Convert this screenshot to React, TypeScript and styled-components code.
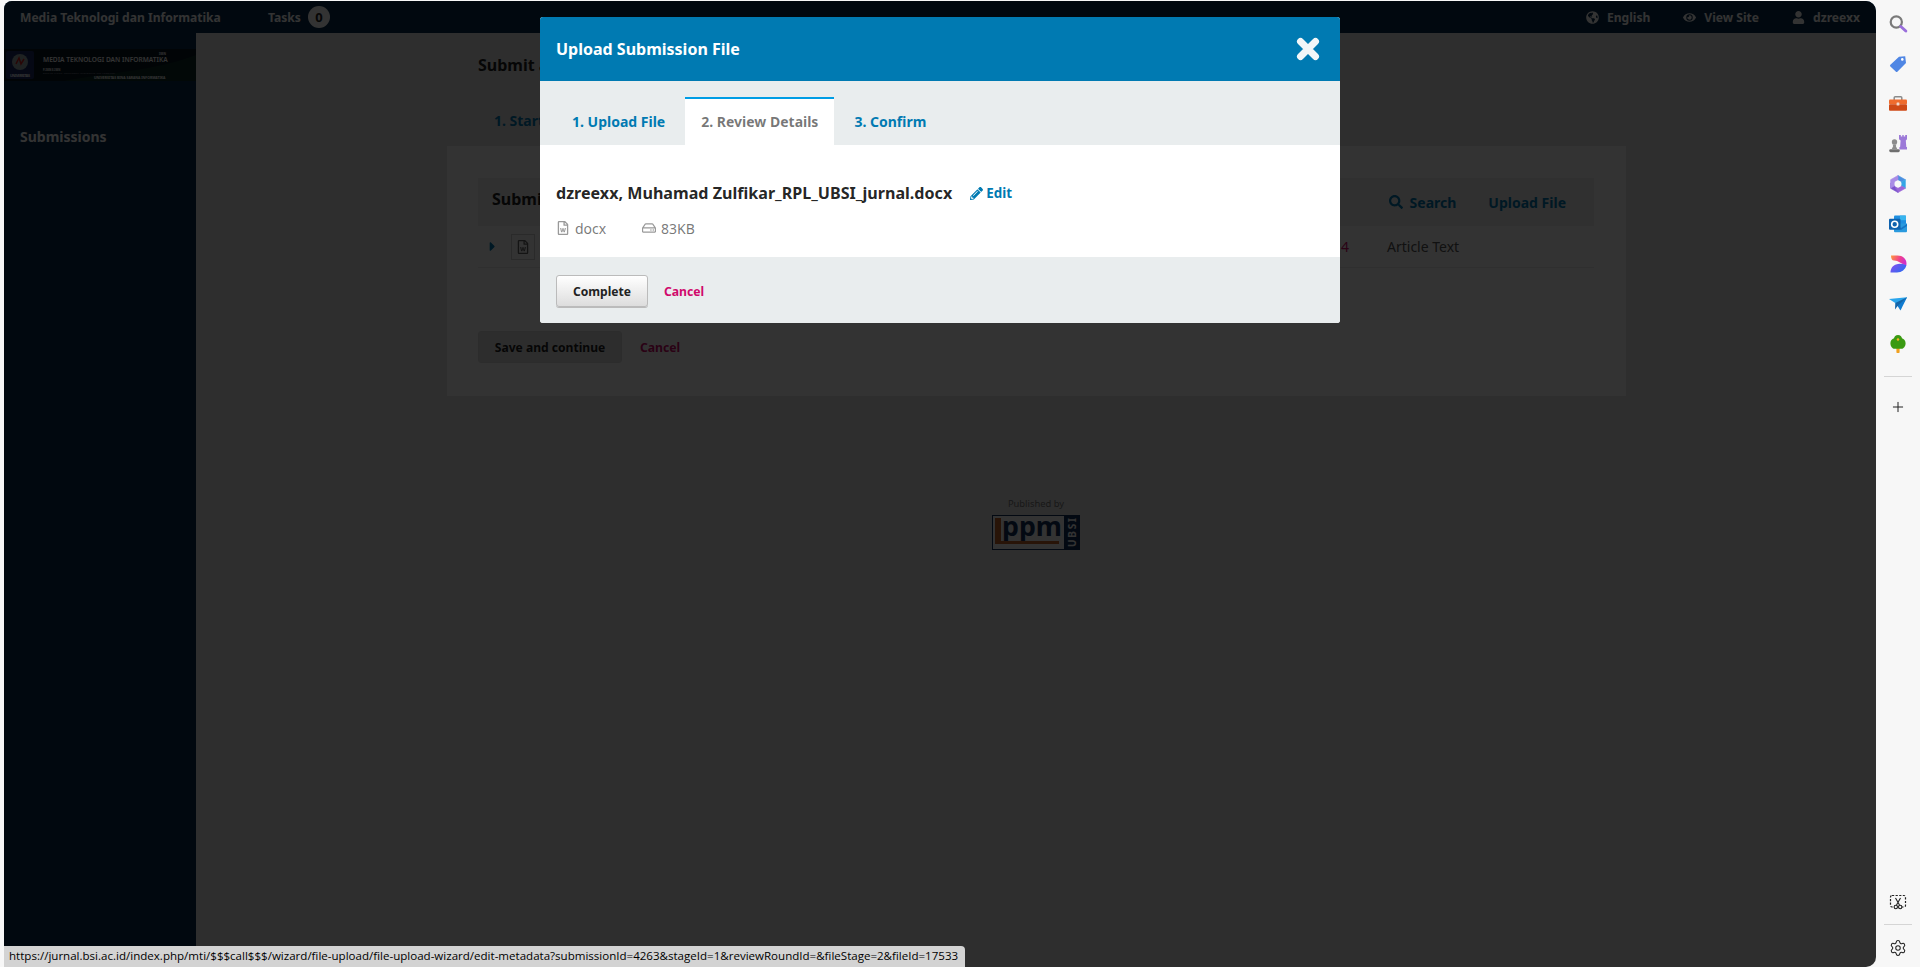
import React from 'react';
import styled, { createGlobalStyle } from 'styled-components';
import { FaGlobeAmericas, FaEye, FaUser, FaPencilAlt, FaSearch, FaRegFileWord, FaRegHdd, FaCaretRight } from 'react-icons/fa';
import { Plus, Settings } from 'lucide-react';

const Global = createGlobalStyle`
  html, body { margin: 0; padding: 0; height: 100%; overflow: hidden; background: #f7f7f7; }
  #root { height: 100%; }
  * { box-sizing: border-box; }
`;

const Shell = styled.div`
  display: flex;
  width: 1920px;
  height: 967px;
  padding: 1px 0 0 4px;
  font-family: "Noto Sans", "Liberation Sans", sans-serif;
  font-size: 14px;
  color: #222;
`;

const Frame = styled.div`
  position: relative;
  flex: 1;
  display: flex;
  flex-direction: column;
  background: #fff;
  overflow: hidden;
  border-radius: 8px 10px 10px 0;
`;

const TopBar = styled.header`
  flex: 0 0 32px;
  display: flex;
  align-items: center;
  padding: 0 16px;
  background: #052a4b;
  color: #fff;
  font-weight: 700;
  font-size: 12.1px;
`;

const SiteName = styled.span`
  width: 248px;
`;

const Badge = styled.span`
  display: inline-flex;
  align-items: center;
  justify-content: center;
  width: 22px;
  height: 22px;
  margin-left: 7px;
  border-radius: 50%;
  background: #fff;
  color: #222;
  font-size: 13px;
`;

const TopRight = styled.div`
  margin-left: auto;
  display: flex;
  align-items: center;
  gap: 33px;
`;

const TopLink = styled.span`
  display: inline-flex;
  align-items: center;
  gap: 8px;
  font-size: 12.1px;
  svg { font-size: 13px; }
`;

const Main = styled.div`
  flex: 1;
  display: flex;
  min-height: 0;
`;

const Side = styled.aside`
  flex: 0 0 192px;
  background: #052a4b;
  padding-top: 16px;
  color: #fff;
`;

const Banner = styled.svg`
  display: block;
  width: 192px;
  height: 32px;
`;

const SideLink = styled.div`
  margin: 46px 0 0 16px;
  font-weight: 700;
  font-size: 14px;
  line-height: 20px;
`;

const Content = styled.main`
  flex: 1;
  background: #e6e6e6;
  padding-top: 21px;
`;

const PageHead = styled.div`
  margin-left: 282px;
  font-weight: 700;
  font-size: 16px;
  line-height: 22px;
`;

const BgTabs = styled.div`
  margin: 35px 0 0 298px;
  height: 35px;
  color: #007ab2;
  font-weight: 700;
  font-size: 14px;
  line-height: 20px;
`;

const Panel = styled.section`
  margin-left: 251px;
  width: 1179px;
  height: 250px;
  padding: 32px 32px 0 31px;
  background: #fff;
`;

const Grid = styled.div`
  box-shadow: 0 1px 1px rgba(0, 0, 0, .08);
  background: #fff;
`;

const GridHead = styled.div`
  height: 48px;
  display: flex;
  align-items: center;
  padding: 0 28px 0 14px;
  background: #eee;
`;

const GridTitle = styled.span`
  margin-bottom: 6px;
  font-weight: 700;
  font-size: 16px;
`;

const GridActions = styled.div`
  margin-left: auto;
  display: flex;
  align-items: center;
  gap: 32px;
  color: #007ab2;
  font-weight: 700;
  font-size: 14px;
`;

const ActionLink = styled.span`
  display: inline-flex;
  align-items: center;
  gap: 7px;
`;

const GridRow = styled.div`
  height: 41px;
  display: flex;
  align-items: center;
  padding-left: 7px;
  color: #555;
`;

const Caret = styled.span`
  display: inline-flex;
  width: 26px;
  color: #007ab2;
  font-size: 15px;
`;

const FileBox = styled.span`
  display: inline-flex;
  align-items: center;
  justify-content: center;
  width: 24px;
  height: 26px;
  border: 1px solid #d0d0d0;
  color: #666;
  font-size: 14px;
`;

const RowNum = styled.span`
  margin-left: 798px;
  width: 54px;
  color: #d00a6c;
`;

const FormActions = styled.div`
  margin-top: 64px;
  display: flex;
  align-items: center;
  gap: 18px;
`;

const Btn = styled.button<{ $w: number }>`
  width: ${p => p.$w}px;
  height: 32px;
  padding: 0;
  border: 1px solid #bbb;
  border-radius: 3px;
  background: linear-gradient(#fff, #ddd);
  box-shadow: 0 1px 0 #bbb;
  color: #222;
  font: 700 12.1px "Noto Sans", sans-serif;
`;

const PageBtn = styled(Btn)`
  border-color: #ddd;
  background: #e2e2e2;
  box-shadow: none;
`;

const CancelLink = styled.span`
  color: #d00a6c;
  font-weight: 700;
  font-size: 12.2px;
`;

const Publisher = styled.div`
  margin-top: 101px;
  display: flex;
  flex-direction: column;
  align-items: center;
  color: #777;
  font-size: 9.4px;
  line-height: 14px;
`;

const PubLogo = styled.svg`
  display: block;
  margin-top: 4px;
  width: 88px;
  height: 35px;
`;

const Overlay = styled.div`
  position: absolute;
  inset: 0;
  background: rgba(0, 0, 0, .8);
`;

const Modal = styled.div`
  position: absolute;
  left: 536px;
  top: 16px;
  width: 800px;
  height: 306px;
  display: flex;
  flex-direction: column;
  border-radius: 3px;
  overflow: hidden;
  background: #fff;
`;

const ModalHead = styled.div`
  flex: 0 0 64px;
  display: flex;
  align-items: center;
  justify-content: space-between;
  padding: 0 19px 0 16px;
  background: #007ab2;
  color: #fff;
  font-weight: 700;
  font-size: 16px;
`;

const CloseIcon = styled.svg`
  display: block;
  width: 26px;
  height: 26px;
`;

const TabBar = styled.div`
  flex: 0 0 64px;
  display: flex;
  align-items: flex-end;
  gap: 4px;
  padding-left: 16px;
  background: #e9edee;
`;

const Tab = styled.div<{ $active?: boolean }>`
  height: 48px;
  padding: 0 16px 2px;
  display: flex;
  align-items: center;
  border-top: 2px solid ${p => (p.$active ? '#009de5' : 'transparent')};
  background: ${p => (p.$active ? '#fff' : 'transparent')};
  color: ${p => (p.$active ? 'rgba(0,0,0,.54)' : '#007ab2')};
  font-weight: 700;
  font-size: 14px;
`;

const ModalBody = styled.div`
  flex: 0 0 112px;
  padding: 36px 16px 0;
`;

const FileLine = styled.div`
  display: flex;
  align-items: center;
  height: 24px;
  font-weight: 700;
  font-size: 16.1px;
  color: rgba(0,0,0,.87);
`;

const EditLink = styled.span`
  display: inline-flex;
  align-items: center;
  gap: 3px;
  margin-left: 18px;
  color: #007ab2;
  font-size: 13.4px;
  svg { font-size: 13px; }
`;

const Meta = styled.div`
  display: flex;
  align-items: center;
  margin-top: 11px;
  height: 24px;
  color: rgba(0,0,0,.54);
  font-size: 14px;
`;

const MetaItem = styled.span<{ $w: number }>`
  display: inline-flex;
  align-items: center;
  gap: 5px;
  width: ${p => p.$w}px;
  svg { font-size: 14px; color: #999; }
`;

const ModalFoot = styled.div`
  flex: 1;
  display: flex;
  align-items: center;
  gap: 16px;
  padding: 2px 16px 0;
  background: #e9edee;
`;

const StatusBar = styled.div`
  position: absolute;
  left: 0;
  bottom: 0;
  width: 961px;
  height: 21px;
  padding-left: 5px;
  background: #d3d3d3;
  border-top-right-radius: 4px;
  color: #000;
  font-family: "Open Sans", "Noto Sans", sans-serif;
  font-size: 11.56px;
  line-height: 20px;
  white-space: nowrap;
`;

const Rail = styled.nav`
  flex: 0 0 44px;
  display: flex;
  flex-direction: column;
  align-items: center;
  padding: 3px 0 0;
  background: #f7f7f7;
`;

const RailItem = styled.div<{ $h?: number }>`
  flex: 0 0 ${p => p.$h ?? 40}px;
  width: 100%;
  display: flex;
  align-items: center;
  justify-content: center;
  color: #222;
`;

const RailSep = styled.div<{ $t: number; $b: number }>`
  flex: 0 0 1px;
  width: 28px;
  margin: ${p => p.$t}px 0 ${p => p.$b}px;
  background: #d5d5d5;
`;

const RailBottom = styled.div`
  margin-top: auto;
  width: 100%;
  display: flex;
  flex-direction: column;
  align-items: center;
  padding-bottom: 2px;
`;

const IconSvg = styled.svg`
  display: block;
  width: 20px;
  height: 20px;
`;

const SearchIcon = () => (
  <IconSvg viewBox="0 0 20 20">
    <circle cx="8.3" cy="8" r="5.6" fill="none" stroke="#7a7a7a" strokeWidth="2.2" />
    <path d="M12.8 12.5l5 4.5" stroke="#9a6fdc" strokeWidth="3" strokeLinecap="round" />
  </IconSvg>
);
const TagIcon = () => (
  <IconSvg viewBox="0 0 20 20">
    <path d="M11 2.8 17.2 2.2 18 9 9.6 17.6a1.3 1.3 0 0 1-1.9 0L2.4 12.6a1.3 1.3 0 0 1 0-1.9z" fill="#4f86e4" />
    <circle cx="14.3" cy="5.4" r="1.3" fill="#fff" />
  </IconSvg>
);
const ToolboxIcon = () => (
  <IconSvg viewBox="0 0 20 20">
    <path d="M6.2 6V3.8a1 1 0 0 1 1-1h5.6a1 1 0 0 1 1 1V6" fill="none" stroke="#8b8b8b" strokeWidth="1.5" />
    <rect x="1" y="5.4" width="18" height="4.8" rx="1" fill="#ef6c2e" />
    <rect x="1" y="10.2" width="18" height="6.6" rx="1" fill="#cf4a17" />
    <rect x="8.6" y="8.6" width="2.8" height="3" rx=".5" fill="#f2d9cc" />
  </IconSvg>
);
const ChessIcon = () => (
  <IconSvg viewBox="0 0 20 20">
    <path d="M11 1h1.8v1.6h1.5V1h1.4v1.6h1.5V1H19v4.2l-1.2 1.3.5 6.5H19v2.4h-7.6V13h.7l.5-6.5L11 5.2z" fill="#9c79d8" />
    <circle cx="6.5" cy="8" r="2.7" fill="#8c8c8c" />
    <path d="M4.5 10.6h4L7.8 12l1.4 3H3.8l1.4-3z" fill="#8c8c8c" />
    <rect x="1.2" y="15.2" width="10.6" height="3" rx="1.4" fill="#6f6f6f" />
  </IconSvg>
);
const CopilotIcon = () => (
  <IconSvg viewBox="0 0 20 20">
    <path d="M10 1.5 17.4 5.7 13.6 8 10 5.8z" fill="#4a90e0" stroke="#4a90e0" strokeWidth=".6" strokeLinejoin="round" />
    <path d="M17.4 5.7v8.6L13.6 12V8z" fill="#35a6e6" stroke="#35a6e6" strokeWidth=".6" strokeLinejoin="round" />
    <path d="M17.4 14.3 10 18.5 6.4 12 10 14.2 13.6 12z" fill="#9a66d8" stroke="#9a66d8" strokeWidth=".6" strokeLinejoin="round" />
    <path d="M10 18.5 2.6 14.3V9l3.8 3z" fill="#7a52cc" stroke="#7a52cc" strokeWidth=".6" strokeLinejoin="round" />
    <path d="M2.6 14V5.7L10 1.5v4.3L6.4 8v4z" fill="#a98ce6" stroke="#a98ce6" strokeWidth=".6" strokeLinejoin="round" />
    <circle cx="10" cy="10" r="3.3" fill="#f7f7f7" />
  </IconSvg>
);
const OutlookIcon = () => (
  <IconSvg viewBox="0 0 20 20">
    <rect x="6" y="1.6" width="12" height="9" rx="1" fill="#1f8fe0" />
    <rect x="12" y="1.6" width="6" height="4.6" fill="#38b4ee" />
    <path d="M6 9.5h13v7.7a1 1 0 0 1-1 1H7a1 1 0 0 1-1-1z" fill="#2a9ade" />
    <path d="M6 10 13 14l6-4v2l-6 4-7-4z" fill="#1673c4" />
    <rect x="1" y="4.8" width="11.5" height="11" rx="1" fill="#0f62ae" />
    <circle cx="6.7" cy="10.3" r="3" fill="none" stroke="#fff" strokeWidth="1.6" />
  </IconSvg>
);
const DesignerIcon = () => (
  <IconSvg viewBox="0 0 20 20">
    <defs>
      <linearGradient id="dsA" x1="0" y1="0" x2="1" y2=".3">
        <stop offset="0" stopColor="#ff9a3c" />
        <stop offset=".6" stopColor="#f0408c" />
        <stop offset="1" stopColor="#d030c8" />
      </linearGradient>
      <linearGradient id="dsB" x1="0" y1="0" x2="1" y2=".6">
        <stop offset="0" stopColor="#8a4df0" />
        <stop offset="1" stopColor="#2f6af0" />
      </linearGradient>
    </defs>
    <path d="M3 1.5h6.5C14.7 1.5 18.5 5 18.5 9.5c0 .9-.1 1.5-.4 2.2L11 8C9.7 7.3 8.8 6.5 6 6.5 4 6.5 3 4.6 3 1.5z" fill="url(#dsA)" />
    <path d="M2.5 18.5C2.5 15 4.5 11.4 8 10.4c3.4-1 7-.6 10.4.9-1 4.2-4.7 7.2-9.4 7.2z" fill="url(#dsB)" />
  </IconSvg>
);
const PlaneIcon = () => (
  <IconSvg viewBox="0 0 20 20">
    <path d="M1 5 19 3.2 12.5 13.5 7.3 9z" fill="#2aa5ec" />
    <path d="M19 3.2 7.3 9 7 15.5l2.6-3.4 2.9 1.4z" fill="#1565a8" />
    <path d="M19 3.2 12.5 16.4 9.6 12.1z" fill="#0f7bd0" />
  </IconSvg>
);
const TreeIcon = () => (
  <IconSvg viewBox="0 0 20 20">
    <rect x="8.4" y="13.5" width="3.2" height="5.5" rx=".8" fill="#f0a020" />
    <path d="M10 1c2.4 0 3.6 1.6 4 3.2 2 .5 3.6 2.5 3.6 5 0 3-2 5.6-4.2 5.6H6.6C4.4 14.8 2.4 12.2 2.4 9.2c0-2.5 1.6-4.500 3.6-5C6.4 2.6 7.6 1 10 1z" fill="#3a9a12" />
    <path d="M10 3.8l1.5 1.7L10 7.2 8.5 5.5z" fill="#f4b024" />
  </IconSvg>
);
const CutIcon = () => (
  <IconSvg viewBox="0 0 20 20">
    <rect x="2.5" y="3.5" width="15" height="11.5" rx="1.5" fill="none" stroke="#222" strokeWidth="1.2" strokeDasharray="2.2 1.4" />
    <path d="M7.5 6 11.5 13M12.5 6 8.5 13" stroke="#222" strokeWidth="1.1" />
    <circle cx="7.8" cy="15" r="1.7" fill="#f7f7f7" stroke="#222" strokeWidth="1.1" />
    <circle cx="12.2" cy="15" r="1.7" fill="#f7f7f7" stroke="#222" strokeWidth="1.1" />
  </IconSvg>
);

const App = () => (
  <Shell>
    <Global />
    <Frame>
      <TopBar>
        <SiteName>Media Teknologi dan Informatika</SiteName>
        <span>Tasks</span>
        <Badge>0</Badge>
        <TopRight>
          <TopLink><FaGlobeAmericas />English</TopLink>
          <TopLink><FaEye />View Site</TopLink>
          <TopLink><FaUser />dzreexx</TopLink>
        </TopRight>
      </TopBar>
      <Main>
        <Side>
          <Banner viewBox="0 0 192 32">
            <rect width="192" height="32" fill="#081620" />
            <path d="M60 32C100 24 150 22 192 6v26z" fill="#0b2a26" />
            <rect x="2" y="2" width="28" height="28" rx="2" fill="#1a2a66" />
            <circle cx="16" cy="13" r="8" fill="#9aa" />
            <path d="M12 15l3-6 2 6 3-5" stroke="#c22" strokeWidth="1.5" fill="none" />
            <text x="6" y="27.5" fill="#fff" fontFamily="'Noto Sans', sans-serif" fontSize="3.6" fontWeight="700" textLength="20">UNIVERSITAS</text>
            <text x="155" y="5.5" fill="#fff" fontFamily="'Noto Sans', sans-serif" fontSize="3" fontWeight="700">ISSN</text>
            <text x="39" y="13" fill="#fff" fontFamily="'Noto Sans', sans-serif" fontSize="6.6" fontWeight="600">MEDIA TEKNOLOGI DAN INFORMATIKA</text>
            <text x="39" y="22" fill="#fff" fontFamily="'Noto Sans', sans-serif" fontSize="2.6" fontWeight="700">P-ISSN E-ISSN</text>
            <text x="39" y="25" fill="#aab" fontFamily="'Noto Sans', sans-serif" fontSize="2.2" textLength="72">Sekolah Tinggi Manajemen Informatika dan Komputer</text>
            <text x="90" y="29.5" fill="#fff" fontFamily="'Noto Sans', sans-serif" fontSize="3.4" fontWeight="700">UNIVERSITAS BINA SARANA INFORMATIKA</text>
          </Banner>
          <SideLink>Submissions</SideLink>
        </Side>
        <Content>
          <PageHead>Submit an Article</PageHead>
          <BgTabs>1. Start</BgTabs>
          <Panel>
            <Grid>
              <GridHead>
                <GridTitle>Submission Files</GridTitle>
                <GridActions>
                  <ActionLink><FaSearch />Search</ActionLink>
                  <span>Upload File</span>
                </GridActions>
              </GridHead>
              <GridRow>
                <Caret><FaCaretRight /></Caret>
                <FileBox><FaRegFileWord /></FileBox>
                <RowNum>14</RowNum>
                Article Text
              </GridRow>
            </Grid>
            <FormActions>
              <PageBtn $w={144}>Save and continue</PageBtn>
              <CancelLink>Cancel</CancelLink>
            </FormActions>
          </Panel>
          <Publisher>
            Published by
            <PubLogo viewBox="0 0 88 35">
              <rect x=".5" y=".5" width="87" height="34" fill="#fff" stroke="#12305a" />
              <rect x="3" y="3" width="6" height="26" fill="#c8642a" />
              <text x="10" y="21" fontFamily="'Noto Sans', sans-serif" fontSize="27" fontWeight="700" fill="#12305a" textLength="60" lengthAdjust="spacingAndGlyphs">ppm</text>
              <rect x="3" y="26" width="64" height="3" fill="#c8642a" />
              <rect x="72" y="0" width="16" height="35" fill="#12305a" />
              <text x="84" y="32" transform="rotate(-90 84 32)" fontFamily="'Noto Sans', sans-serif" fontSize="10" fontWeight="700" fill="#fff" textLength="29">UBSI</text>
            </PubLogo>
          </Publisher>
        </Content>
      </Main>
      <Overlay />
      <Modal>
        <ModalHead>
          Upload Submission File
          <CloseIcon viewBox="0 0 26 26">
            <path d="M5.5 5.5 20.5 20.5M20.5 5.5 5.5 20.5" stroke="#f2f6f8" strokeWidth="7" strokeLinecap="round" />
          </CloseIcon>
        </ModalHead>
        <TabBar>
          <Tab>1. Upload File</Tab>
          <Tab $active>2. Review Details</Tab>
          <Tab>3. Confirm</Tab>
        </TabBar>
        <ModalBody>
          <FileLine>
            dzreexx, Muhamad Zulfikar_RPL_UBSI_jurnal.docx
            <EditLink><FaPencilAlt />Edit</EditLink>
          </FileLine>
          <Meta>
            <MetaItem $w={86}><FaRegFileWord />docx</MetaItem>
            <MetaItem $w={80}><FaRegHdd />83KB</MetaItem>
          </Meta>
        </ModalBody>
        <ModalFoot>
          <Btn $w={92}>Complete</Btn>
          <CancelLink>Cancel</CancelLink>
        </ModalFoot>
      </Modal>
      <StatusBar>https://jurnal.bsi.ac.id/index.php/mti/$$$call$$$/wizard/file-upload/file-upload-wizard/edit-metadata?submissionId=4263&amp;stageId=1&amp;reviewRoundId=&amp;fileStage=2&amp;fileId=17533</StatusBar>
    </Frame>
    <Rail>
      <RailItem><SearchIcon /></RailItem>
      <RailItem><TagIcon /></RailItem>
      <RailItem><ToolboxIcon /></RailItem>
      <RailItem><ChessIcon /></RailItem>
      <RailItem><CopilotIcon /></RailItem>
      <RailItem><OutlookIcon /></RailItem>
      <RailItem><DesignerIcon /></RailItem>
      <RailItem><PlaneIcon /></RailItem>
      <RailItem><TreeIcon /></RailItem>
      <RailSep $t={12} $b={10} />
      <RailItem><Plus size={16} strokeWidth={1.5} /></RailItem>
      <RailBottom>
        <RailItem $h={32}><CutIcon /></RailItem>
        <RailSep $t={6} $b={6} />
        <RailItem $h={34}><Settings size={18} strokeWidth={1.4} /></RailItem>
      </RailBottom>
    </Rail>
  </Shell>
);

export default App;
